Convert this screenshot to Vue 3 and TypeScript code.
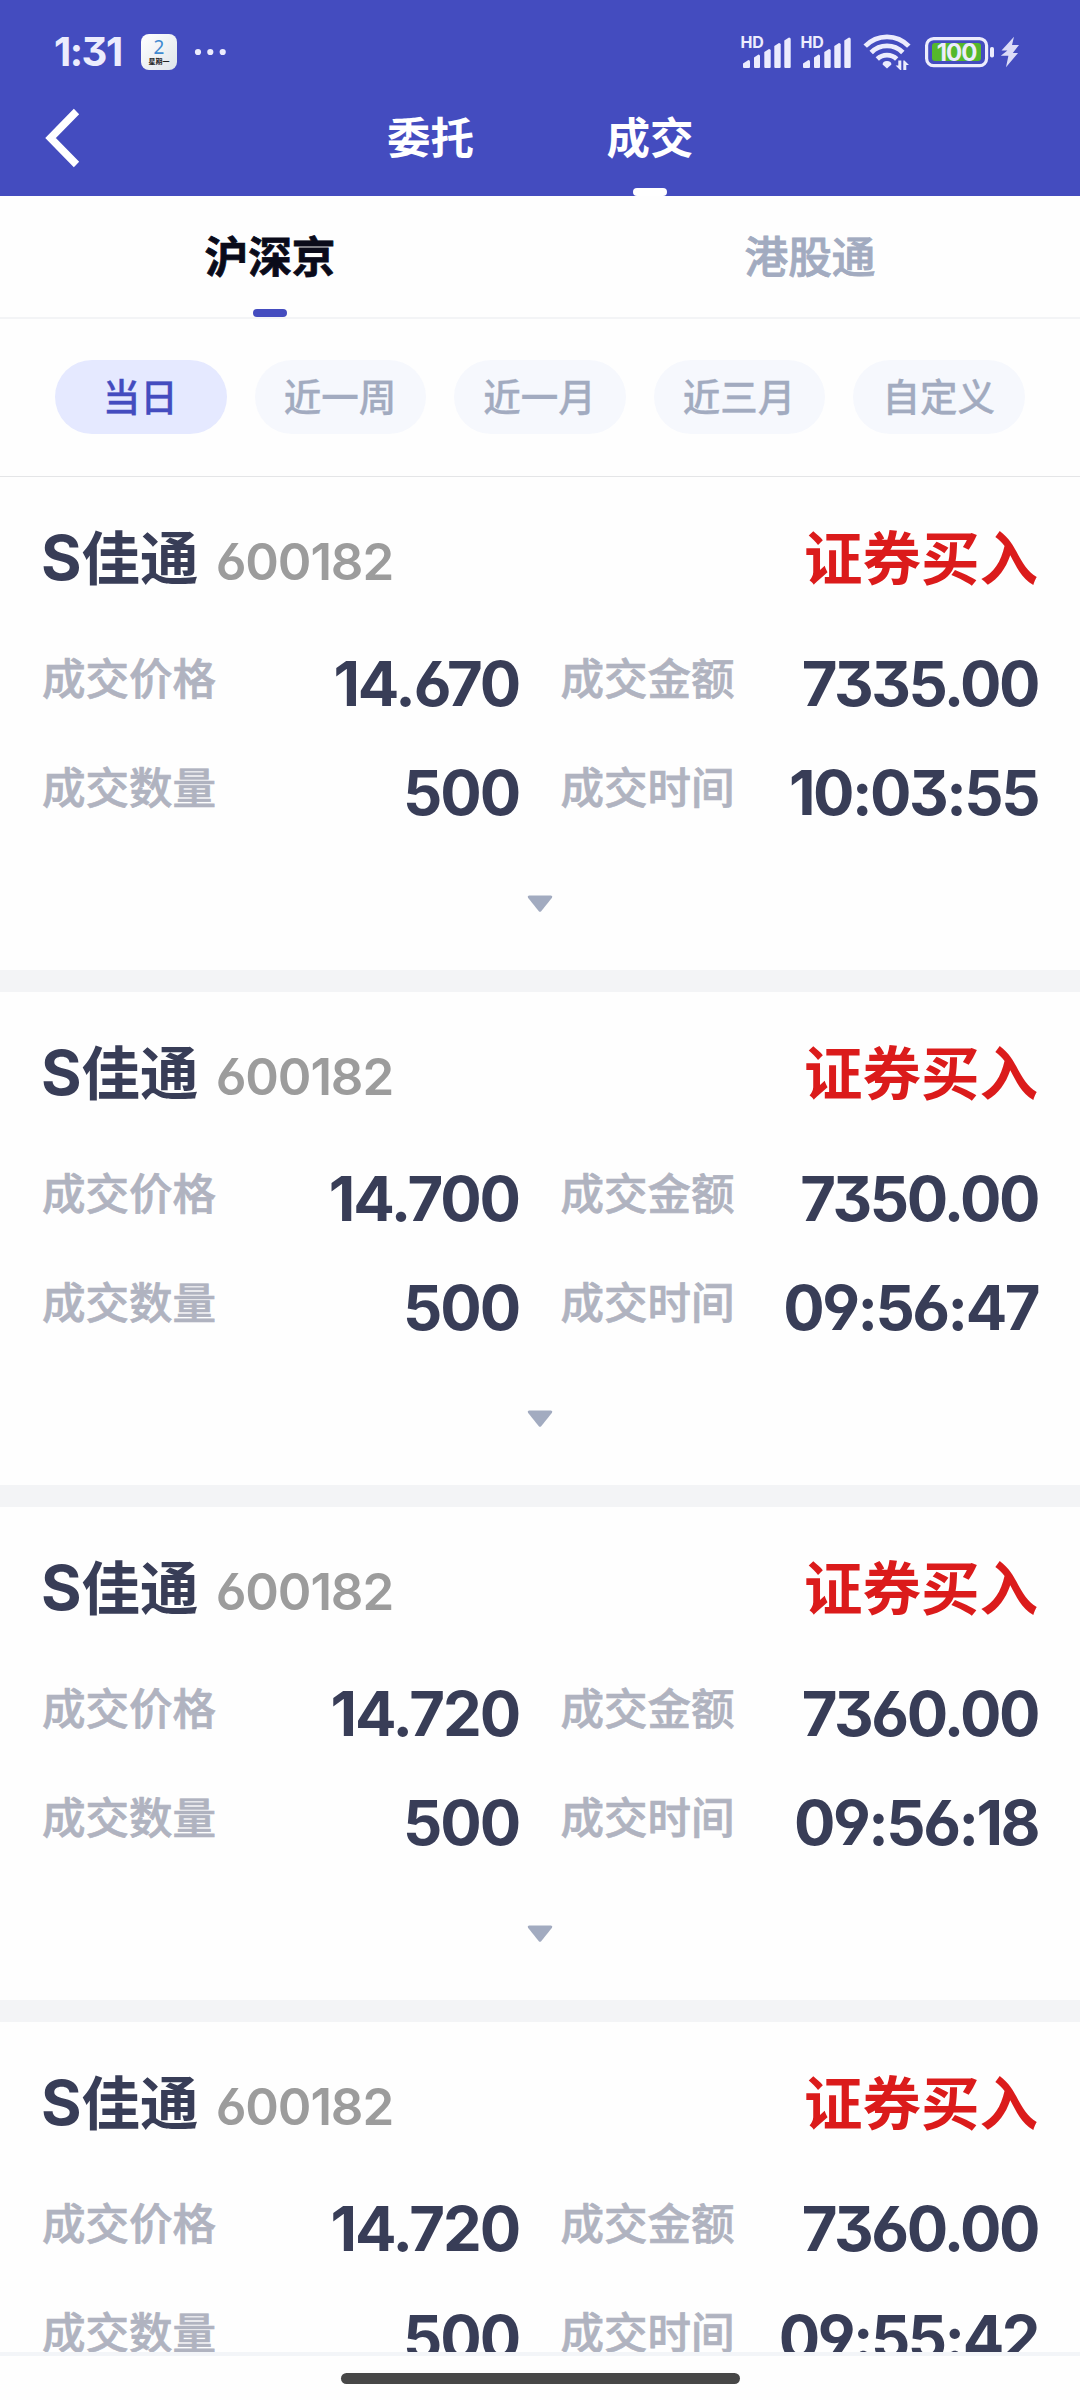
<script setup lang="ts">
interface Trade {
  price: string
  amount: string
  quantity: string
  time: string
}

const ranges: string[] = ['当日', '近一周', '近一月', '近三月', '自定义']
const trades: Trade[] = [
  { price: '14.670', amount: '7335.00', quantity: '500', time: '10:03:55' },
  { price: '14.700', amount: '7350.00', quantity: '500', time: '09:56:47' },
  { price: '14.720', amount: '7360.00', quantity: '500', time: '09:56:18' },
  { price: '14.720', amount: '7360.00', quantity: '500', time: '09:55:42' },
]
</script>

<template>
  <div class="screen">
    <header class="header">
      <div class="status">
        <span class="clock">1:31</span>
        <div class="calendar">
          <span class="day">2</span>
          <span class="weekday">星期一</span>
        </div>
        <svg class="dots" width="32" height="8" viewBox="0 0 32 8">
          <circle cx="4" cy="4" r="3.1" /><circle cx="16.3" cy="4" r="3.1" /><circle cx="28.7" cy="4" r="3.1" />
        </svg>
        <svg v-for="n in 2" :key="n" class="signal" width="60" height="36" viewBox="0 0 60 36">
          <text x="0.500" y="14" class="hd">HD</text>
          <path d="M3 29.5 L8.5 26 Q10 26 10 27.5 V33 Q10 34 9 34 H4 Q3 34 3 33 Z" />
          <path d="M14 23.5 L18.5 20.5 Q20 20.5 20 22 V33 Q20 34 19 34 H15 Q14 34 14 33 Z" />
          <path d="M24.3 18 L29 15 Q30.7 15 30.7 16.5 V33 Q30.7 34 29.7 34 H25.3 Q24.3 34 24.3 33 Z" />
          <path d="M34.3 12 L39 9 Q40.7 9 40.7 10.5 V33 Q40.7 34 39.7 34 H35.3 Q34.3 34 34.3 33 Z" />
          <path d="M44.3 6.5 L49 3.5 Q50.7 3.5 50.7 5 V33 Q50.7 34 49.7 34 H45.3 Q44.3 34 44.3 33 Z" />
        </svg>
        <svg class="wifi" width="48" height="38" viewBox="0 0 48 38">
          <g fill="none" stroke="#ececfd" stroke-width="4.8">
            <path d="M2.2 13.2 A30 30 0 0 1 45.8 13.2" />
            <path d="M8.2 19.5 A22 22 0 0 1 39.8 19.5" />
            <path d="M14.3 26 A14 14 0 0 1 33.7 26" />
          </g>
          <path d="M24 35.5 L19.6 31.5 Q19.6 28 24 28 Q28.4 28 28.4 31.5 Z" />
          <path d="M35.3 27.5 h3 v9.5 h-1.2 L32.6 32.6 h2.7 Z M40.3 37 V27.5 h1.2 L46 32 h-2.7 V37 Z" />
        </svg>
        <svg class="battery" width="96" height="32" viewBox="0 0 96 32">
          <rect x="1.6" y="2.6" width="60" height="27" rx="7" fill="none" stroke="#ececfd" stroke-width="3.2" />
          <rect x="7" y="7" width="49" height="18" rx="3" class="charge" />
          <rect x="65" y="11" width="4" height="10.5" rx="1.8" />
          <text x="31.5" y="24.6" class="level">100</text>
          <path class="bolt" d="M89 0.8 L76.5 14.6 H82.4 L75.8 19.8 L83.4 19.8 L81 31.3 L93 17 H87.8 L94 9 H87 Z" />
        </svg>
      </div>
      <nav class="nav">
        <svg class="back" width="36" height="60" viewBox="0 0 36 60">
          <path d="M32.5 3.5 L6.5 30 L32.5 56.5" fill="none" stroke="#fff" stroke-width="7.5" />
        </svg>
        <span class="nav-item">委托</span>
        <span class="nav-item current">成交</span>
      </nav>
    </header>

    <div class="tabs">
      <div class="tab active">沪深京</div>
      <div class="tab">港股通</div>
    </div>

    <div class="filters">
      <button v-for="(r, i) in ranges" :key="r" class="pill" :class="{ on: i === 0 }">{{ r }}</button>
    </div>

    <main class="list">
      <section v-for="t in trades" :key="t.time" class="card">
        <div class="head">
          <span class="name"><span class="latin">S</span>佳通</span>
          <span class="code">600182</span>
          <span class="side">证券买入</span>
        </div>
        <div class="grid">
          <div class="cell"><span class="label">成交价格</span><span class="value">{{ t.price }}</span></div>
          <div class="cell"><span class="label">成交金额</span><span class="value tight">{{ t.amount }}</span></div>
          <div class="cell"><span class="label">成交数量</span><span class="value">{{ t.quantity }}</span></div>
          <div class="cell"><span class="label">成交时间</span><span class="value tight">{{ t.time }}</span></div>
        </div>
        <div class="expand">
          <svg width="26" height="18" viewBox="0 0 26 18">
            <path d="M2 0.5 H24 Q26 1 25 2.8 L14.2 16.2 Q13 17.5 11.8 16.2 L1 2.8 Q0 1 2 0.5 Z" fill="#a2abc0" />
          </svg>
        </div>
      </section>
    </main>

    <footer class="home"><div class="handle"></div></footer>
  </div>
</template>

<style>
body {
  margin: 0;
  background: #fff;
}
</style>

<style scoped>
.screen {
  width: 1080px;
  height: 2400px;
  display: flex;
  flex-direction: column;
  overflow: hidden;
  background: #fefefe;
  font-family: "Noto Sans CJK SC", sans-serif;
}
.header {
  height: 196px;
  flex: none;
  background: #444cbf;
}
.status {
  height: 74px;
  box-sizing: border-box;
  padding: 30px 0 0 54px;
  display: flex;
  align-items: center;
  fill: #ececfd;
}
.clock {
  width: 87px;
  font: 700 40px/44px Inter, sans-serif;
  font-feature-settings: "cv09";
  letter-spacing: -1.5px;
  color: #ececfd;
}
.calendar {
  width: 36px;
  height: 36px;
  border-radius: 8px;
  display: flex;
  flex-direction: column;
  align-items: center;
  background: linear-gradient(135deg, #fff, #dfe5ea);
}
.day {
  font: 400 19px/22px "Noto Sans", sans-serif;
  height: 22px;
  padding-top: 2px;
  color: #3f8ad0;
}
.weekday {
  font-size: 7px;
  font-weight: 700;
  line-height: 7px;
  color: #222;
}
.dots {
  margin-left: 17px;
  margin-right: 514px;
}
.signal {
  flex: none;
  overflow: visible;
}
.hd {
  font: 700 16px Inter, sans-serif;
  letter-spacing: -0.3px;
}
.wifi {
  flex: none;
  margin-left: 3px;
}
.battery {
  flex: none;
  margin-left: 14px;
}
.charge {
  fill: #55b82c;
}
.level {
  font: 700 24px Inter, sans-serif;
  letter-spacing: -1px;
  text-anchor: middle;
}
.bolt {
  fill: #dcdcf7;
}
.nav {
  height: 122px;
  display: flex;
  align-items: stretch;
}
.back {
  width: 36px;
  margin: 34px 0 0 44px;
}
.nav-item {
  width: 88px;
  font-size: 43.5px;
  font-weight: 700;
  line-height: 123px;
  color: #fff;
  white-space: nowrap;
  margin-left: 307px;
}
.nav-item.current {
  margin-left: 131px;
  display: flex;
  flex-direction: column;
  align-items: center;
}
.nav-item.current::after {
  content: "";
  width: 34px;
  height: 8px;
  margin-top: -9px;
  border-radius: 4px;
  background: #fff;
}
.tabs {
  flex: none;
  height: 121px;
  display: flex;
  border-bottom: 2px solid #f3f4f6;
}
.tab {
  flex: 1;
  display: flex;
  flex-direction: column;
  align-items: center;
  font-size: 43.7px;
  font-weight: 500;
  line-height: 116px;
  color: #a2abc0;
  -webkit-text-stroke: 0.8px currentColor;
}
.tab.active {
  font-weight: 700;
  color: #0a0b1a;
}
.tab.active::after {
  content: "";
  width: 34px;
  height: 8px;
  margin-top: -3px;
  border-radius: 4px;
  background: #444cbf;
}
.filters {
  flex: none;
  height: 155px;
  box-sizing: content-box;
  border-bottom: 1px solid #e4e5e7;
  display: flex;
  align-items: center;
  gap: 28px;
  padding: 0 55px 2px 55px;
}
.pill {
  flex: 1;
  height: 74px;
  padding: 0 1px 5px 0;
  border: 0;
  border-radius: 37px;
  background: #f6f8fd;
  color: #a2abc0;
  font: 500 37.5px/69px "Noto Sans CJK SC", sans-serif;
  -webkit-text-stroke: 0.3px currentColor;
}
.pill.on {
  background: #e5e9ff;
  color: #444cbf;
}
.list {
  flex: none;
  height: 1875px;
  overflow: hidden;
}
.card {
  height: 493px;
  box-sizing: content-box;
  border-bottom: 22px solid #f3f4f6;
}
.head {
  display: flex;
  align-items: baseline;
  height: 80px;
  padding: 38px 42px 0 41px;
}
.name {
  font-size: 58.5px;
  font-weight: 700;
  line-height: 80px;
  color: #383d57;
}
.latin {
  font: 700 62px/60px Inter, sans-serif;
}
.code {
  margin-left: 17px;
  font: 600 51px/60px Inter, sans-serif;
  font-feature-settings: "cv03", "cv04", "cv09";
  letter-spacing: -1.1px;
  color: #9c9c9c;
}
.side {
  margin-left: auto;
  font-size: 58.5px;
  font-weight: 700;
  line-height: 80px;
  color: #db1b1b;
}
.grid {
  margin-top: 26px;
  padding: 0 42px;
  display: grid;
  grid-template-columns: 1fr 1fr;
  grid-auto-rows: 109px;
  column-gap: 41px;
}
.cell {
  display: flex;
  justify-content: space-between;
  align-items: flex-start;
  white-space: nowrap;
}
.label {
  font-size: 43.5px;
  font-weight: 500;
  line-height: 111px;
  color: #b0b3c0;
  -webkit-text-stroke: 0.7px currentColor;
}
.value {
  font: 650 61.5px/126px Inter, sans-serif;
  font-feature-settings: "cv03", "cv04", "cv09";
  letter-spacing: -2.1px;
  padding-right: 0.5px;
  color: #383d57;
}
.value.tight {
  letter-spacing: -2.5px;
  padding-right: 0;
}
.expand {
  height: 129px;
  display: flex;
  align-items: center;
  justify-content: center;
}
.home {
  flex: none;
  height: 44px;
  border-top: 4px solid #f3f5f8;
  display: flex;
  justify-content: center;
}
.handle {
  width: 399px;
  height: 11px;
  margin-top: 17px;
  border-radius: 6px;
  background: #474747;
}
</style>
